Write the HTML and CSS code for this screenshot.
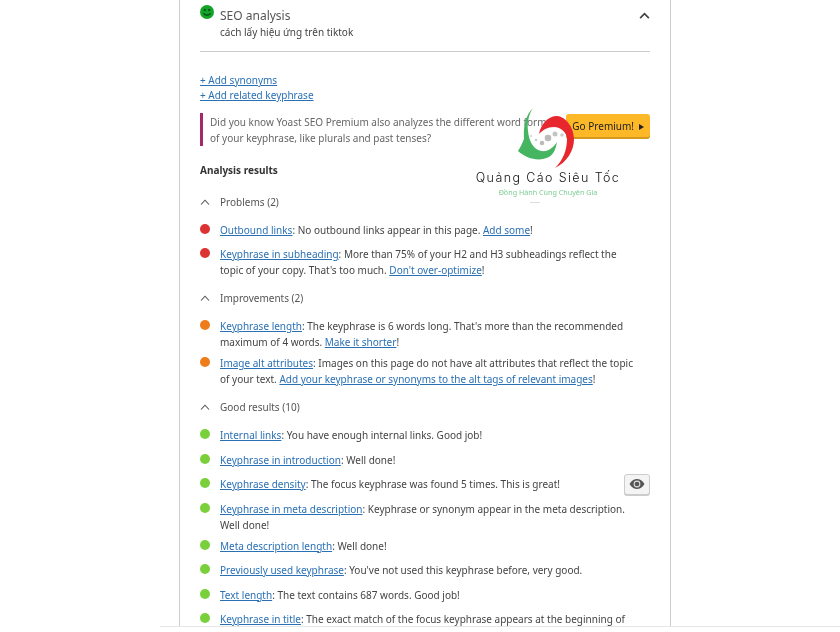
FILE: index.html
```html
<!DOCTYPE html>
<html lang="en">
<head>
    <meta charset="UTF-8">
    <meta name="viewport" content="width=device-width, initial-scale=1.0">
    <title>SEO analysis</title>
    <link rel="stylesheet" href="styles.css">
</head>
<body>
    <div class="panel">
        <!-- Header -->
        <div class="panel-header">
            <svg class="smiley" viewBox="0 0 14 14" width="14" height="14">
                <circle cx="7" cy="7" r="7" fill="#12a428"/>
                <circle cx="4.8" cy="5" r="1.1" fill="#053d10"/>
                <circle cx="9.2" cy="5" r="1.1" fill="#053d10"/>
                <path d="M3.6 8.2 C4.8 10.8 9.2 10.8 10.4 8.2" fill="none" stroke="#053d10" stroke-width="1.1"/>
            </svg>
            <div class="panel-title">
                <h2>SEO analysis</h2>
                <p>cách lấy hiệu ứng trên tiktok</p>
            </div>
            <svg class="chevron-big" viewBox="0 0 12 8" width="11" height="7">
                <path d="M1 7 L6 2 L11 7" fill="none" stroke="#444" stroke-width="2"/>
            </svg>
        </div>

        <div class="add-links">
            <a href="#">+ Add synonyms</a>
            <a href="#">+ Add related keyphrase</a>
        </div>

        <!-- Premium notice -->
        <div class="premium-note">
            <p>Did you know Yoast SEO Premium also analyzes the different word forms of your keyphrase, like plurals and past tenses?</p>
            <button class="premium-btn">Go Premium! <span class="arrow"></span></button>
        </div>

        <h3 class="results-title">Analysis results</h3>

        <!-- Problems -->
        <div class="group-title">
            <svg viewBox="0 0 10 6" width="10" height="6"><path d="M1 5.5 L5 1.2 L9 5.5" fill="none" stroke="#555" stroke-width="1.1"/></svg>
            Problems (2)
        </div>
        <div class="result"><span class="dot red"></span><p><a href="#">Outbound links</a>: No outbound links appear in this page. <a href="#">Add some</a>!</p></div>
        <div class="result"><span class="dot red"></span><p><a href="#">Keyphrase in subheading</a>: More than 75% of your H2 and H3 subheadings reflect the topic of your copy. That's too much. <a href="#">Don't over-optimize</a>!</p></div>

        <!-- Improvements -->
        <div class="group-title">
            <svg viewBox="0 0 10 6" width="10" height="6"><path d="M1 5.5 L5 1.2 L9 5.5" fill="none" stroke="#555" stroke-width="1.1"/></svg>
            Improvements (2)
        </div>
        <div class="result"><span class="dot orange"></span><p><a href="#">Keyphrase length</a>: The keyphrase is 6 words long. That's more than the recommended maximum of 4 words. <a href="#">Make it shorter</a>!</p></div>
        <div class="result"><span class="dot orange"></span><p><a href="#">Image alt attributes</a>: Images on this page do not have alt attributes that reflect the topic of your text. <a href="#">Add your keyphrase or synonyms to the alt tags of relevant images</a>!</p></div>

        <!-- Good results -->
        <div class="group-title">
            <svg viewBox="0 0 10 6" width="10" height="6"><path d="M1 5.5 L5 1.2 L9 5.5" fill="none" stroke="#555" stroke-width="1.1"/></svg>
            Good results (10)
        </div>
        <div class="result"><span class="dot green"></span><p><a href="#">Internal links</a>: You have enough internal links. Good job!</p></div>
        <div class="result"><span class="dot green"></span><p><a href="#">Keyphrase in introduction</a>: Well done!</p></div>
        <div class="result"><span class="dot green"></span><p><a href="#">Keyphrase density</a>: The focus keyphrase was found 5 times. This is great!</p>
            <button class="eye-btn">
                <svg viewBox="0 0 16 10" width="16" height="10">
                    <path d="M0.5 5 C3 1 5.5 0 8 0 C10.5 0 13 1 15.5 5 C13 9 10.5 10 8 10 C5.5 10 3 9 0.5 5 Z" fill="#555"/>
                    <circle cx="8" cy="5" r="3.4" fill="#ddd"/>
                    <circle cx="8" cy="5" r="2.3" fill="#555"/>
                </svg>
            </button>
        </div>
        <div class="result"><span class="dot green"></span><p><a href="#">Keyphrase in meta description</a>: Keyphrase or synonym appear in the meta description. Well done!</p></div>
        <div class="result"><span class="dot green"></span><p><a href="#">Meta description length</a>: Well done!</p></div>
        <div class="result"><span class="dot green"></span><p><a href="#">Previously used keyphrase</a>: You've not used this keyphrase before, very good.</p></div>
        <div class="result"><span class="dot green"></span><p><a href="#">Text length</a>: The text contains 687 words. Good job!</p></div>
        <div class="result"><span class="dot green"></span><p><a href="#">Keyphrase in title</a>: The exact match of the focus keyphrase appears at the beginning of</p></div>
    </div>

    <!-- Watermark -->
    <div class="watermark">
        <svg class="wm-logo" viewBox="0 0 65 66" width="65" height="66">
            <path d="M18 3 C11 10 8 20 9 34 C7 39 5 43 3 46 C12 54 24 57 34 52 C39 49 41 43 42 37 C38 43 33 47 26 46 C18 44 14 36 13 26 C12 17 14 9 18 3 Z" fill="#45b562"/>
            <path d="M24 29 C26 19 33 11 42 11 C52 12 59 24 59 34 C59 46 52 57 40 63 C48 55 52 45 52 34 C52 28 46 22 39 22 C32 22 28 25 24 29 Z" fill="#e8262d"/>
            <circle cx="33" cy="33" r="3.3" fill="#bbb"/>
            <circle cx="40" cy="29" r="2.5" fill="#c4c4c4"/>
            <circle cx="47" cy="30" r="1.8" fill="#ccc"/>
            <circle cx="27" cy="38" r="2.3" fill="#bbb"/>
            <circle cx="21" cy="35" r="1.3" fill="#ccc"/>
            <circle cx="16" cy="31" r="1" fill="#ccc"/>
        </svg>
        <div class="wm-name">Quảng Cáo Siêu Tốc</div>
        <div class="wm-tag">Đồng Hành Cùng Chuyên Gia</div>
        <div class="wm-mark"></div>
    </div>

    <div class="bottom-strip"></div>
</body>
</html>
```

FILE: styles.css
```css
/* General Styles */
html, body {
    height: 100%;
}

body {
    font-family: "Noto Sans", Arial, sans-serif;
    font-size: 10px;
    line-height: 16px;
    margin: 0;
    background-color: #fff;
    color: #444;
    overflow: hidden;
    position: relative;
}

a {
    color: #2a70b4;
    text-decoration: underline;
}

p {
    margin: 0;
}

.panel {
    width: 450px;
    margin-left: 179px;
    padding: 0 20px;
    border-left: 1px solid #ccc;
    border-right: 1px solid #ccc;
    filter: blur(0.3px);
}

/* Header */
.panel-header {
    display: flex;
    align-items: flex-start;
    padding-top: 5px;
    height: 46px;
    border-bottom: 1px solid #ccc;
}

.smiley {
    flex: none;
}

.panel-title {
    margin-left: 6px;
    flex: 1;
}

.panel-title h2 {
    margin: 3px 0 0;
    font-size: 12px;
    font-weight: 400;
    line-height: 16px;
    color: #555;
}

.chevron-big {
    margin: 7px 0 0;
    flex: none;
}

.add-links {
    margin-top: 21px;
}

.add-links a {
    display: block;
    line-height: 15px;
}

/* Premium notice */
.premium-note {
    display: flex;
    align-items: flex-start;
    margin-top: 10px;
    height: 33px;
    border-left: 3px solid #a4286a;
    padding-left: 7px;
    color: #666;
}

.premium-note p {
    flex: 1;
    padding: 1px 8px 0 0;
}

.premium-btn {
    flex: none;
    width: 84px;
    height: 23px;
    margin-top: 1px;
    padding: 0;
    border: none;
    border-radius: 3px;
    background-color: #fdb827;
    box-shadow: 0 2px 0 #d59a1c;
    font: inherit;
    color: #222;
}

.arrow {
    display: inline-block;
    margin-left: 2px;
    border-left: 5px solid #222;
    border-top: 3.5px solid transparent;
    border-bottom: 3.5px solid transparent;
}

.results-title {
    margin: 16px 0 8.5px;
    font-size: 10px;
    line-height: 16px;
    font-weight: 700;
    color: #333;
}

/* Result groups */
.group-title {
    display: flex;
    align-items: center;
    gap: 10px;
    padding: 7px 0 12px;
    color: #555;
}

.result {
    display: flex;
    align-items: flex-start;
    min-height: 24.5px;
    box-sizing: border-box;
    padding-bottom: 5px;
}

.result p {
    flex: 1;
    max-width: 415px;
}

.dot {
    flex: none;
    width: 10px;
    height: 10px;
    margin: 2px 10px 0 0;
    border-radius: 50%;
}

.red {
    background-color: #dc3232;
}

.orange {
    background-color: #ee7c1b;
}

.green {
    background-color: #7ad03a;
}

.eye-btn {
    flex: none;
    width: 26px;
    height: 21px;
    margin: -2px 0 0 auto;
    padding: 0;
    background-color: #f4f4f4;
    border: 1px solid #ccc;
    border-radius: 3px;
    box-shadow: 0 1px 0 #ccc;
}

/* Watermark */
.watermark {
    position: absolute;
    left: 468px;
    top: 105px;
    width: 160px;
    text-align: center;
    filter: blur(0.3px);
}

.wm-logo {
    display: block;
    margin-left: 47px;
}

.wm-name {
    margin-top: -1px;
    font-family: Inter, sans-serif;
    font-size: 12.5px;
    font-weight: 300;
    line-height: 15px;
    color: #111;
    letter-spacing: 1.4px;
    white-space: nowrap;
}

.wm-tag {
    margin-top: 1px;
    font-size: 7.2px;
    line-height: 12px;
    color: #7ccc92;
}

.wm-mark {
    width: 10px;
    height: 1px;
    margin: 4px 0 0 62px;
    background-color: #ddd;
}

.bottom-strip {
    position: absolute;
    left: 160px;
    right: 0;
    top: 626px;
    height: 6px;
    background-color: #fff;
    border-top: 1px solid #e6e6e6;
}
```
